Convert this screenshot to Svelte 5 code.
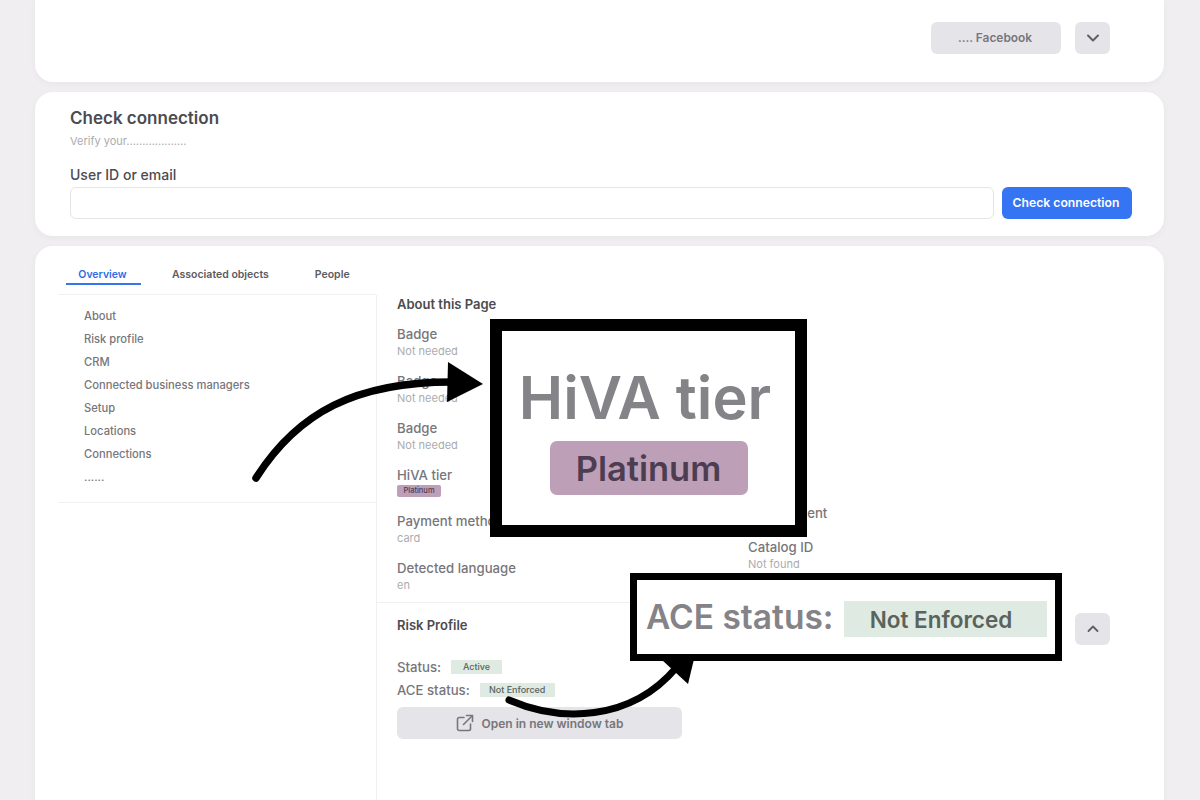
<script>
  const menu = ['About', 'Risk profile', 'CRM', 'Connected business managers', 'Setup', 'Locations', 'Connections', '......'];
  const left = [
    { label: 'Badge', value: 'Not needed' },
    { label: 'Badge', value: 'Not needed' },
    { label: 'Badge', value: 'Not needed' },
    { label: 'HiVA tier', tag: 'Platinum' },
    { label: 'Payment method', value: 'card' },
    { label: 'Detected language', value: 'en' }
  ];
</script>

<div class="page">
  <section class="card top-card">
    <button class="btn fb">.... Facebook</button>
    <button class="btn square" aria-label="Expand">
      <svg width="14" height="14" viewBox="0 0 14 14" fill="none"><path d="M2 4.5 7 9.5 12 4.5" stroke="#5f5f64" stroke-width="2" stroke-linecap="round" stroke-linejoin="round"/></svg>
    </button>
  </section>

  <section class="card check-card">
    <h2>Check connection</h2>
    <p class="verify">Verify your...................</p>
    <div class="input-label">User ID or email</div>
    <div class="input-row">
      <div class="input"></div>
      <button class="primary">Check connection</button>
    </div>
  </section>

  <section class="card main-card">
    <nav class="tabs">
      <span class="tab active">Overview</span>
      <span class="tab assoc">Associated objects</span>
      <span class="tab people">People</span>
    </nav>
    <div class="content">
      <aside class="side">
        <ul>
          {#each menu as item}
            <li>{item}</li>
          {/each}
        </ul>
      </aside>
      <div class="detail">
        <div class="about">
          <h3>About this Page</h3>
          <div class="columns">
            <div class="col-left">
              {#each left as f}
                <div class="field" class:short={f.tag}>
                  <div class="f-label">{f.label}</div>
                  {#if f.tag}
                    <span class="tag-plat">{f.tag}</span>
                  {:else}
                    <div class="f-value">{f.value}</div>
                  {/if}
                </div>
              {/each}
            </div>
            <div class="col-right">
              <div class="f-label r-first">Engagement</div>
              <div class="field-r">
                <div class="f-label">Catalog ID</div>
                <div class="f-value">Not found</div>
              </div>
            </div>
          </div>
        </div>
        <div class="risk">
          <div class="risk-main">
            <h3 class="risk-title">Risk Profile</h3>
            <div class="status-row"><span class="s-label">Status:</span><span class="tag-green active-tag">Active</span></div>
            <div class="status-row ace"><span class="s-label">ACE status:</span><span class="tag-green ne-tag">Not Enforced</span></div>
            <button class="btn open">
              <svg width="18" height="18" viewBox="0 0 18 18" fill="none" stroke="#77767b" stroke-width="1.6" stroke-linecap="round" stroke-linejoin="round"><path d="M8 3.5H3.2A1.7 1.7 0 0 0 1.5 5.2v9.6a1.7 1.7 0 0 0 1.7 1.7h9.6a1.7 1.7 0 0 0 1.7-1.7V10"/><path d="M7.5 10.5 16 2"/><path d="M10.5 1.5h6v6"/></svg>
              Open in new window tab
            </button>
          </div>
          <button class="btn square up" aria-label="Collapse">
            <svg width="14" height="14" viewBox="0 0 14 14" fill="none"><path d="M2.5 9 7 4.5 11.5 9" stroke="#5f5f64" stroke-width="1.8" stroke-linecap="round" stroke-linejoin="round"/></svg>
          </button>
        </div>
      </div>
    </div>
  </section>

  <svg class="arrows" width="1200" height="800" viewBox="0 0 1200 800" fill="none" aria-hidden="true">
    <path d="M256 478C298 412 356 382 452 382" stroke="#000" stroke-width="7.5" stroke-linecap="round"/>
    <path d="M448 362 483 384 447 402Z" fill="#000"/>
    <path d="M509 700C560 722 630 722 676 668" stroke="#000" stroke-width="7" stroke-linecap="round"/>
    <path d="M662 660 695 655 688 684Z" fill="#000"/>
  </svg>

  <div class="call hiva">
    <div class="hiva-title">HiVA tier</div>
    <div class="hiva-tag">Platinum</div>
  </div>

  <div class="call acebox">
    <span class="ace-label">ACE status:</span>
    <span class="ace-tag">Not Enforced</span>
  </div>
</div>

<style>
  :global(body) {
    margin: 0;
    background: #f0eef1;
    font-family: Inter, "Liberation Sans", sans-serif;
  }
  * { box-sizing: border-box; }
  .page {
    position: relative;
    width: 1200px;
    height: 800px;
    overflow: hidden;
    padding: 0 36px 0 35px;
    display: flex;
    flex-direction: column;
    gap: 10px;
  }
  .card {
    background: #fff;
    border-radius: 18px;
    box-shadow: 0 2px 6px rgba(90, 85, 100, 0.05);
    flex: none;
  }
  button { font-family: inherit; border: 0; padding: 0; }
  .btn {
    background: #e5e4e9;
    color: #77767b;
    border-radius: 6px;
    font-weight: 600;
    font-size: 12px;
    display: flex;
    align-items: center;
    justify-content: center;
  }
  .square { width: 35px; height: 32px; }

  .top-card {
    height: 82px;
    border-radius: 0 0 18px 18px;
    padding: 22px 54px 0 0;
    display: flex;
    justify-content: flex-end;
    gap: 14px;
  }
  .fb { width: 130px; height: 32px; padding-bottom: 2px; padding-right: 2px; font-size: 11.9px; }

  .check-card { height: 144px; padding: 15px 32px 0 35px; }
  h2 { margin: 0; font-size: 17px; line-height: 22px; font-weight: 600; color: #4c4b4f; }
  .verify { margin: 5px 0 0; font-size: 11px; line-height: 14px; color: #ababae; }
  .input-label { margin-top: 18px; font-size: 14px; line-height: 18px; font-weight: 500; color: #4c4b4f; }
  .input-row { display: flex; gap: 8px; margin-top: 3px; }
  .input { flex: 1; height: 32px; border: 1px solid #e5e5e8; border-radius: 6px; background: #fff; }
  .primary {
    width: 130px; height: 32px; padding: 0 2px 2px 0; background: #3574f3; color: #fff;
    border-radius: 6px; font-size: 12.2px; font-weight: 600;
  }

  .main-card { height: 600px; border-radius: 18px 18px 0 0; padding: 0 24px 0 23px; }
  .tabs {
    width: 318px;
    height: 49px;
    border-bottom: 1px solid #f0eff2;
    display: flex;
    align-items: flex-start;
    padding: 22px 0 0 8px;
    font-size: 10.5px;
    line-height: 14px;
    font-weight: 600;
    color: #5c5b60;
  }
  .tab { display: block; }
  .active {
    width: 75px; height: 17px; padding-right: 2px; text-align: center; color: #2f6be6;
    border-bottom: 2px solid #3574f3;
  }
  .assoc { margin-left: 31px; }
  .people { margin-left: 46px; }

  .content { display: flex; height: 555px; }
  .side { width: 319px; flex: none; border-right: 1px solid #f0eff2; }
  .side ul {
    list-style: none; margin: 0; padding: 10px 0 13px 26px;
    border-bottom: 1px solid #f0eff2;
    font-size: 11.2px; font-weight: 500; color: #77767b;
  }
  .side li { height: 23px; line-height: 23px; }

  .detail { flex: 1; display: flex; flex-direction: column; }
  .about { padding: 1px 0 0 20px; height: 308px; width: 600px; border-bottom: 1px solid #f0eff2; }
  h3 { margin: 0; font-size: 13px; line-height: 16px; font-weight: 600; color: #4c4b4f; }
  .columns { display: flex; }
  .col-left { width: 351px; flex: none; padding-top: 8px; }
  .field { height: 47px; padding-top: 6px; }
  .field.short { height: 46px; }
  .f-label { font-size: 13.2px; line-height: 17px; font-weight: 500; color: #77767b; white-space: nowrap; }
  .f-value { font-size: 11px; line-height: 14px; color: #ababae; margin-top: 1px; }
  .tag-plat {
    display: block; width: 44px; height: 12px; margin-top: 1px; background: #bd9fb8; border-radius: 2px;
    font-size: 7.5px; line-height: 12px; text-align: center; font-weight: 500; color: #4d3d50;
  }
  .col-right { padding-top: 193px; }
  .field-r { margin-top: 17px; }

  .risk { flex: 1; display: flex; justify-content: space-between; align-items: flex-start; padding: 10px 30px 0 20px; }
  .risk-main { width: 285px; }
  .risk-title { line-height: 24px; }
  .status-row { display: flex; align-items: center; height: 18px; font-size: 13.2px; font-weight: 500; color: #77767b; margin-top: 21px; }
  .ace { margin-top: 5px; }
  .s-label { margin-right: 9px; }
  .tag-green {
    display: block; height: 14px; line-height: 14px; background: #dfeae2; color: #5a635c;
    font-size: 9px; font-weight: 500; text-align: center;
  }
  .active-tag { width: 51px; margin-left: 1px; }
  .ne-tag { width: 75px; margin-left: 1px; }
  .open { width: 285px; height: 32px; margin-top: 8px; gap: 8px; font-size: 12px; }

  .arrows { position: absolute; left: 0; top: 0; pointer-events: none; }
  .call { position: absolute; background: #fff; border: solid #000; }
  .hiva {
    left: 490px; top: 319px; width: 317px; height: 218px; border-width: 12px;
    display: flex; flex-direction: column; align-items: center;
  }
  .hiva-title { font-size: 59.5px; line-height: 68px; font-weight: 600; color: #848387; margin: 32px 7px 0 0; white-space: nowrap; }
  .hiva-tag {
    width: 198px; height: 54px; margin-top: 10px; background: #bd9fb8; border-radius: 7px;
    font-size: 34.5px; line-height: 56px; text-align: center; font-weight: 600; color: #4d3d50;
  }
  .acebox {
    left: 630px; top: 573px; width: 432px; height: 88px; border-width: 7px;
    display: flex; align-items: center; padding: 0 8px 0 9px;
  }
  .ace-label { font-size: 33.5px; font-weight: 600; color: #848387; white-space: nowrap; }
  .ace-tag {
    width: 203px; height: 36px; margin: 3px 0 0 10px; padding-right: 8px; background: #dfeae2;
    font-size: 22.5px; line-height: 38px; text-align: center; font-weight: 600; color: #5a635c;
  }
</style>
